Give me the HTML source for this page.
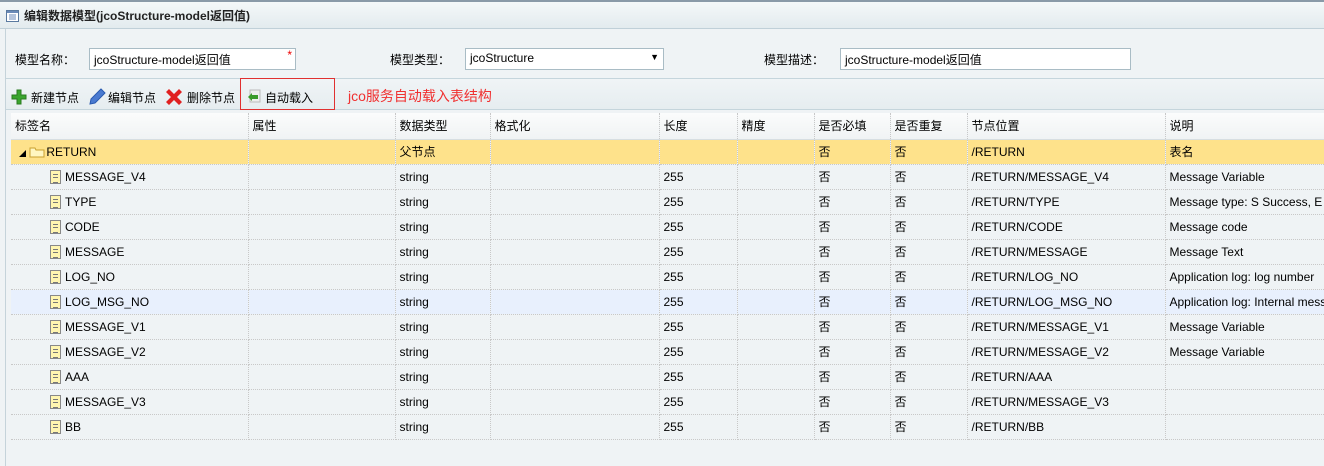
<!DOCTYPE html>
<html><head><meta charset="utf-8"><style>
*{margin:0;padding:0;box-sizing:border-box}
body{width:1324px;height:466px;overflow:hidden;background:#eff3f5;font-family:"Liberation Sans","Noto Sans CJK SC",sans-serif;font-size:12px;color:#000;position:relative}
.title{position:absolute;left:0;top:0;width:1324px;height:29px;background:linear-gradient(#f4f8f9,#e3ebee);border-top:2px solid #8a9aa8;border-bottom:1px solid #c0d0d8;}
.title span{position:absolute;left:24px;top:5px;font-size:12px;font-weight:bold;color:#222}
.frame{position:absolute;left:5px;top:29px;width:1px;height:437px;background:#c5d3da}
.lbl{position:absolute;top:51px}
.inp{position:absolute;top:48px;height:22px;background:#fff;border:1px solid #a9bcc5;padding:2px 4px;font-size:12px}
.tb{position:absolute;left:6px;top:78px;width:1318px;height:32px;background:linear-gradient(#f0f4f6,#e6edf0);border-top:1px solid #c5d5dc;border-bottom:1px solid #c5d5dc}
.tbi{position:absolute;top:89px}
table{position:absolute;left:11px;top:113px;border-collapse:collapse;table-layout:fixed;width:1320px}
td{height:25px;border-right:1px dotted #c8c8c8;border-bottom:1px dotted #c8c8c8;padding:0 4px;white-space:nowrap;overflow:hidden;font-size:12px}
tr.h td{height:26px;background:linear-gradient(#fbfcfc,#f0f3f4);border-bottom:1px solid #d7dee1}
tr.sel td{background:#fee28b}
tr.hov td{background:#e8f0fd}
.doc{display:inline-block;width:11px;height:14px;border:1px solid #888;background:#fff5b0;vertical-align:-3px;margin-right:4px;margin-left:35px;position:relative}
.doc:after{content:"";position:absolute;left:2px;top:3px;width:5px;height:7px;border-top:1px solid #777;border-bottom:1px solid #777}
.doc:before{content:"";position:absolute;left:2px;top:6px;width:5px;border-top:1px solid #777}
</style></head><body>
<div class="title"><svg style="position:absolute;left:6px;top:8px" width="13" height="12"><rect x=".5" y=".5" width="12" height="11" fill="#fff" stroke="#5a7aa0"/><rect x="1" y="1" width="11" height="2" fill="#6a8ab8"/><path d="M3 5h7M3 7h7M3 9h7" stroke="#6a8ab8"/></svg><span>编辑数据模型(jcoStructure-model返回值)</span></div>
<div class="frame"></div>
<div class="lbl" style="left:15px">模型名称：</div>
<div class="inp" style="left:89px;width:207px">jcoStructure-model返回值<span style="position:absolute;right:3px;top:-1px;color:#e00">*</span></div>
<div class="lbl" style="left:390px">模型类型：</div>
<div class="inp" style="left:465px;width:199px">jcoStructure<span style="position:absolute;right:4px;top:3px;font-size:9px">▼</span></div>
<div class="lbl" style="left:764px">模型描述：</div>
<div class="inp" style="left:840px;width:291px">jcoStructure-model返回值</div>
<div class="tb"></div>
<svg style="position:absolute;left:11px;top:89px" width="16" height="16"><path d="M6 1h4v5h5v4h-5v5H6v-5H1V6h5z" fill="#3aa52e" stroke="#2a7a20"/></svg>
<div class="tbi" style="left:31px">新建节点</div>
<svg style="position:absolute;left:88px;top:88px" width="18" height="18"><path d="M2 16l1-5L13 1l4 4L7 15z" fill="#4a7ad0" stroke="#2a5ab0"/></svg>
<div class="tbi" style="left:108px">编辑节点</div>
<svg style="position:absolute;left:166px;top:88px" width="17" height="17"><path d="M3 1l5 5 5-5 3 3-5 5 5 5-3 3-5-5-5 5-3-3 5-5-5-5z" fill="#e02020"/></svg>
<div class="tbi" style="left:187px">删除节点</div>
<div style="position:absolute;left:240px;top:78px;width:95px;height:32px;border:1px solid #e03030"></div>
<svg style="position:absolute;left:247px;top:89px" width="14" height="14"><rect x="3" y="1" width="10" height="12" fill="#eee" stroke="#bbb"/><path d="M1 8l4-4v2h6v4H5v2z" fill="#3a9a2a"/></svg>
<div class="tbi" style="left:265px">自动载入</div>
<div style="position:absolute;left:348px;top:86px;color:#f03030;font-size:14px">jco服务自动载入表结构</div>
<table>
<colgroup><col style="width:237px"><col style="width:147px"><col style="width:95px"><col style="width:169px"><col style="width:78px"><col style="width:77px"><col style="width:76px"><col style="width:77px"><col style="width:198px"><col style="width:186px"></colgroup>
<tr class="h"><td>标签名</td><td>属性</td><td>数据类型</td><td>格式化</td><td>长度</td><td>精度</td><td>是否必填</td><td>是否重复</td><td>节点位置</td><td>说明</td></tr>
<tr class="sel"><td><span style="font-size:7px;margin-left:4px">◢</span> <svg width="17" height="12" style="vertical-align:-2px"><path d="M1 2h5l1 2h8v7H1z" fill="#fff6c0" stroke="#c8a030"/></svg>RETURN</td><td></td><td>父节点</td><td></td><td></td><td></td><td>否</td><td>否</td><td>/RETURN</td><td>表名</td></tr>
<tr><td><span class="doc"></span>MESSAGE_V4</td><td></td><td>string</td><td></td><td>255</td><td></td><td>否</td><td>否</td><td>/RETURN/MESSAGE_V4</td><td>Message Variable</td></tr>
<tr><td><span class="doc"></span>TYPE</td><td></td><td>string</td><td></td><td>255</td><td></td><td>否</td><td>否</td><td>/RETURN/TYPE</td><td>Message type: S Success, E Error</td></tr>
<tr><td><span class="doc"></span>CODE</td><td></td><td>string</td><td></td><td>255</td><td></td><td>否</td><td>否</td><td>/RETURN/CODE</td><td>Message code</td></tr>
<tr><td><span class="doc"></span>MESSAGE</td><td></td><td>string</td><td></td><td>255</td><td></td><td>否</td><td>否</td><td>/RETURN/MESSAGE</td><td>Message Text</td></tr>
<tr><td><span class="doc"></span>LOG_NO</td><td></td><td>string</td><td></td><td>255</td><td></td><td>否</td><td>否</td><td>/RETURN/LOG_NO</td><td>Application log: log number</td></tr>
<tr class="hov"><td><span class="doc"></span>LOG_MSG_NO</td><td></td><td>string</td><td></td><td>255</td><td></td><td>否</td><td>否</td><td>/RETURN/LOG_MSG_NO</td><td>Application log: Internal message</td></tr>
<tr><td><span class="doc"></span>MESSAGE_V1</td><td></td><td>string</td><td></td><td>255</td><td></td><td>否</td><td>否</td><td>/RETURN/MESSAGE_V1</td><td>Message Variable</td></tr>
<tr><td><span class="doc"></span>MESSAGE_V2</td><td></td><td>string</td><td></td><td>255</td><td></td><td>否</td><td>否</td><td>/RETURN/MESSAGE_V2</td><td>Message Variable</td></tr>
<tr><td><span class="doc"></span>AAA</td><td></td><td>string</td><td></td><td>255</td><td></td><td>否</td><td>否</td><td>/RETURN/AAA</td><td></td></tr>
<tr><td><span class="doc"></span>MESSAGE_V3</td><td></td><td>string</td><td></td><td>255</td><td></td><td>否</td><td>否</td><td>/RETURN/MESSAGE_V3</td><td></td></tr>
<tr><td><span class="doc"></span>BB</td><td></td><td>string</td><td></td><td>255</td><td></td><td>否</td><td>否</td><td>/RETURN/BB</td><td></td></tr>
</table>
</body></html>
